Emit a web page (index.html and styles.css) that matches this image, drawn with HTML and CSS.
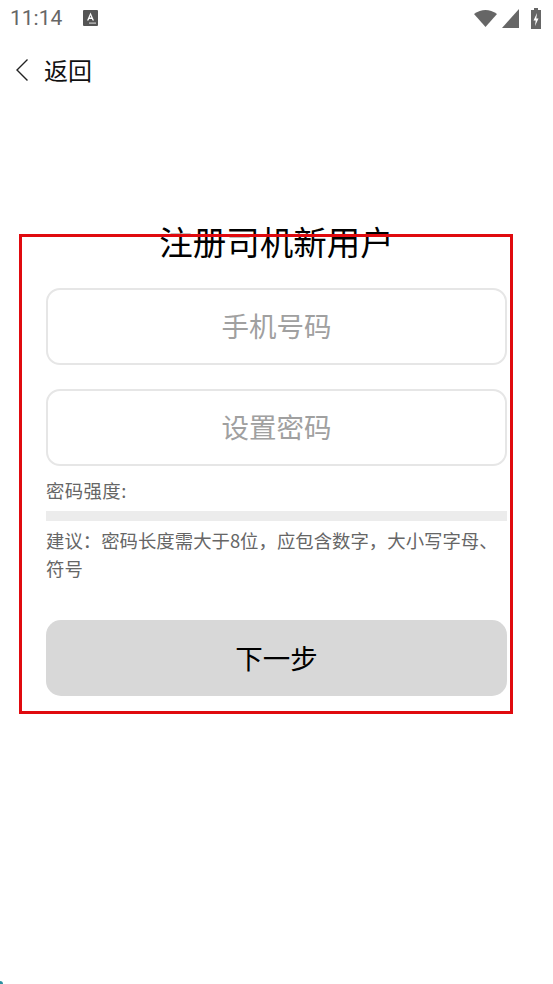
FILE: index.html
```html
<!DOCTYPE html>
<html lang="zh-CN">
<head>
<meta charset="utf-8">
<title>注册司机新用户</title>
<link rel="stylesheet" href="styles.css">
</head>
<body>
<div class="screen">
  <header class="status-bar">
    <span class="time">11:14</span>
    <svg class="notif" width="15" height="16" viewBox="0 0 15 16">
      <rect width="15" height="16" rx="1" fill="#555"/>
      <path d="M4 10.500 7.500 2.500l3.500 8H9.500l-.6-1.600H6.100l-.6 1.600zM6.700 7.500h1.600L7.500 5.200z" fill="#fff"/>
      <rect x="6" y="12.500" width="7" height="1.200" fill="#ccc"/>
    </svg>
    <span class="status-right">
      <svg class="wifi" width="23" height="18" viewBox="0 0 23 18"><path d="M0 5Q11.500-3 23 5L11.500 18z" fill="#666"/></svg>
      <svg class="signal" width="17" height="19" viewBox="0 0 17 19"><path d="M0 19 17 0v19z" fill="#666"/></svg>
      <svg class="battery" width="10" height="21" viewBox="0 0 10 21"><path d="M3 0h4v2h3v19H0V2h3z" fill="#666"/><path d="M6 5 2.500 12.500h2.200L4 18l3.500-7.500H5.300z" fill="#fff"/></svg>
    </span>
  </header>
  <nav class="nav">
    <svg class="back" width="12" height="22" viewBox="0 0 12 22"><path d="M11.500.5 1 11l10.500 10.500" fill="none" stroke="#222" stroke-width="1.400"/></svg>
    <span class="nav-label">返回</span>
  </nav>
  <main class="form">
    <h1 class="title">注册司机新用户</h1>
    <input class="field" type="text" placeholder="手机号码">
    <input class="field" type="text" placeholder="设置密码">
    <div class="strength-label">密码强度:</div>
    <div class="strength-bar"></div>
    <p class="hint">建议&#xFF1A;密码长度需大于8位&#xFF0C;应包含数字&#xFF0C;大小写字母、符号</p>
    <button class="next" type="button">下一步</button>
  </main>
  <div class="highlight"></div>
  <div class="corner"></div>
</div>
</body>
</html>
```

FILE: styles.css
```css
* { box-sizing: border-box; }
html, body { margin: 0; padding: 0; background: #fff; }
body { font-family: "Noto Sans CJK SC", "Noto Sans", sans-serif; }
.screen { position: relative; width: 553px; height: 984px; overflow: hidden; background: #fff; }

.status-bar { display: flex; align-items: center; height: 36px; padding: 0 12px 0 10px; color: #666; }
.time { font-family: Roboto, sans-serif; font-size: 21px; line-height: 36px; }
.notif { margin-left: 21px; }
.status-right { display: flex; align-items: center; gap: 5px; margin-left: auto; }
.battery { margin-left: 7px; }

.nav { display: flex; align-items: center; height: 68px; padding-left: 16px; }
.nav-label { margin-left: 16px; font-size: 24px; line-height: 34px; color: #111; }

.form { display: flex; flex-direction: column; padding: 115px 46px 0; }
.title { margin: 0 0 25px; font-size: 33.500px; font-weight: 400; line-height: 44px; text-align: center; color: #000; }
.field { width: 100%; height: 77px; margin-bottom: 24px; padding: 0 12px 4px; border: 2px solid #e6e6e6; border-radius: 14px; background: #fff; font: inherit; font-size: 27.500px; text-align: center; color: #333; outline: none; }
.field::placeholder { color: #a0a0a0; opacity: 1; }
.strength-label { font-size: 18.400px; line-height: 26px; margin-top: -13px; color: #666; letter-spacing: 0.400px; }
.strength-bar { height: 10px; margin-top: 8px; background: #ececec; }
.hint { margin: 5px 0 0; font-size: 18.400px; line-height: 28px; color: #666; }
.next { height: 76px; margin-top: 38px; padding: 0 0 3px; border: 0; border-radius: 15px; background: #d8d8d8; font: inherit; font-size: 27.500px; color: #000; }

.highlight { position: absolute; left: 19px; top: 234px; width: 494px; height: 480px; border: 3px solid #e00a0f; pointer-events: none; }
.corner { position: absolute; left: 0; top: 981px; width: 3px; height: 3px; border-radius: 0 3px 0 0; background: #2a8fa0; }
```
